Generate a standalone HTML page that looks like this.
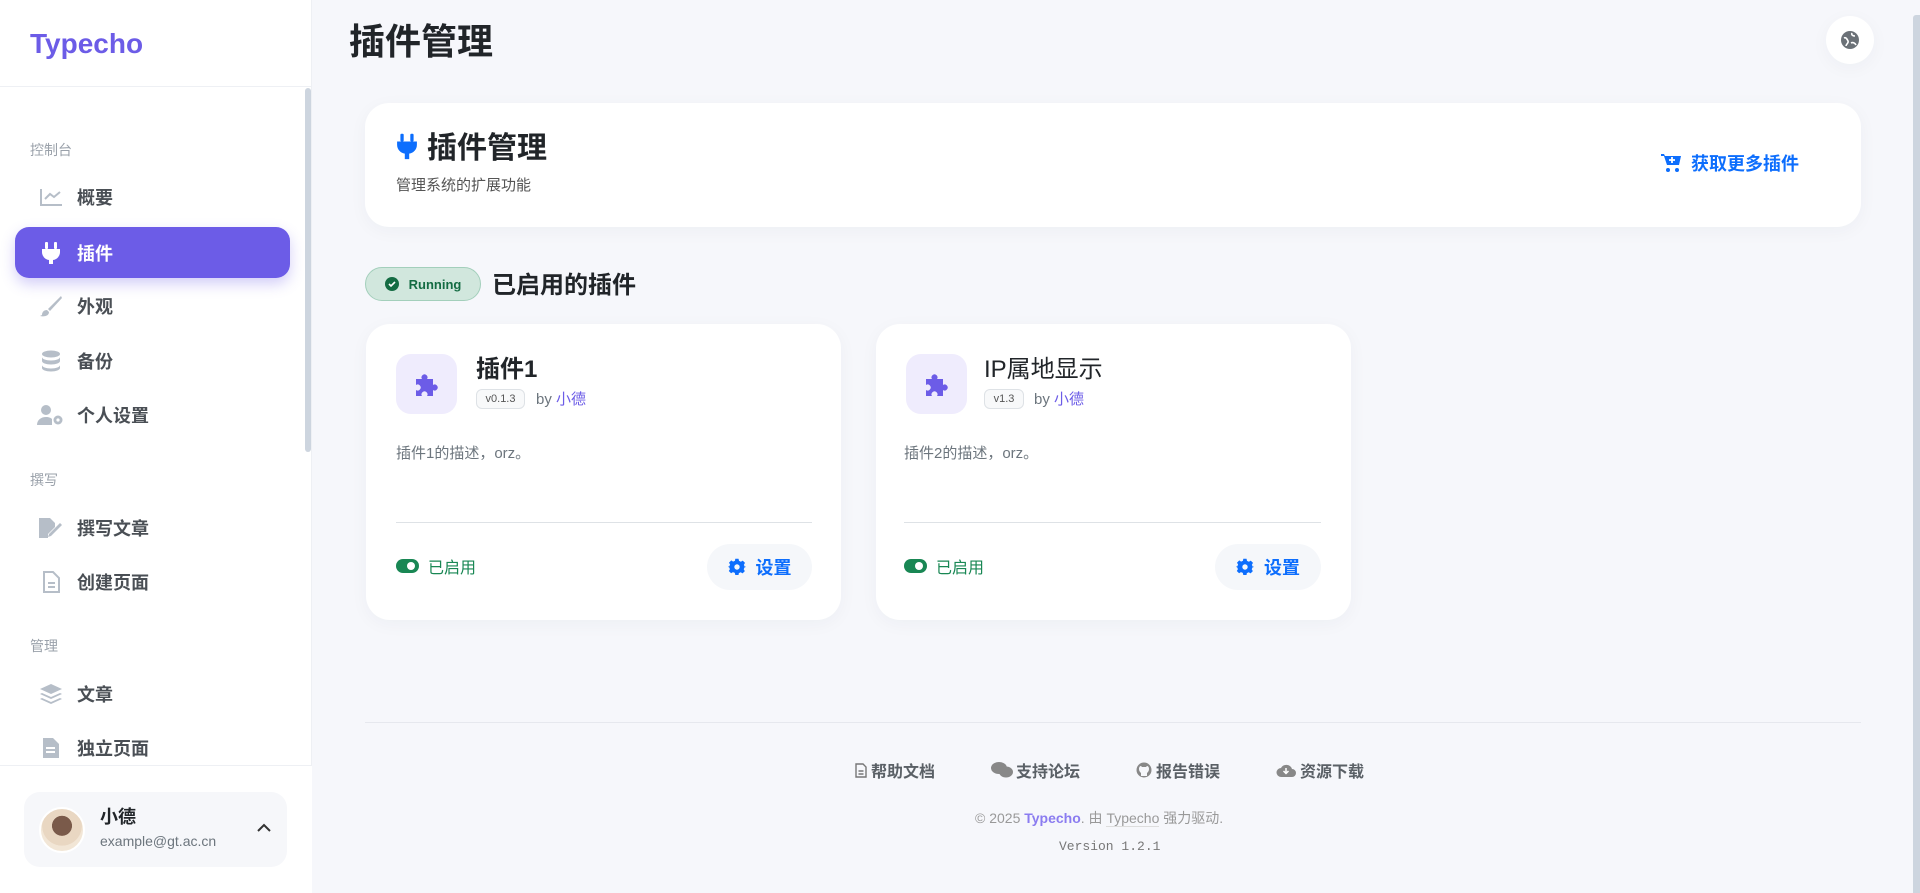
<!DOCTYPE html>
<html><head><meta charset="utf-8"><style>
*{box-sizing:border-box;margin:0;padding:0}
body{width:1920px;height:893px;overflow:hidden;background:#f6f7fb;font-family:"Liberation Sans","Noto Sans CJK SC",sans-serif;color:#212529;position:relative}
.abs{position:absolute}
.side{left:0;top:0;width:312px;height:893px;background:#fff;border-right:1px solid #eef0f4}
.logo{left:30px;top:28px;font-size:28px;font-weight:700;color:#6c5ce7;letter-spacing:0}
.sec{left:30px;font-size:14px;color:#9aa1aa}
.item{left:15px;width:275px;height:50px;border-radius:14px;display:flex;align-items:center;font-size:18px;font-weight:700;color:#4a4f55}
.item .ic{width:36px;margin-left:18px;display:flex;justify-content:center}
.item span{margin-left:8px}
.item.act{background:#6c5ce7;color:#fff;box-shadow:0 6px 14px rgba(108,92,231,.3)}
.card{background:#fff;border-radius:24px;box-shadow:0 4px 18px rgba(30,40,80,.04)}
.btn{display:flex;align-items:center;justify-content:center}
</style></head><body>
<div class="abs side">
<div class="abs logo">Typecho</div>
<div class="abs" style="left:0;top:86px;width:312px;height:1px;background:#eef0f4"></div>
<div class="abs" style="left:305px;top:88px;width:6px;height:364px;background:#cdd5df;border-radius:3px"></div>
<div class="abs sec" style="top:140px">控制台</div>
<div class="abs item" style="top:172px"><div class="ic"><svg width="24" height="20" viewBox="0 0 24 20" fill="none" stroke="#b6bec8" stroke-width="2"><path d="M2 2v16h21M6 12l5-5 4 3 6-5"/></svg></div><span>概要</span></div>
<div class="abs item act" style="top:227px;height:51px"><div class="ic"><svg width="20" height="24" viewBox="0 0 20 24" fill="#fff"><rect x="4" y="1" width="3" height="7" rx="1"/><rect x="13" y="1" width="3" height="7" rx="1"/><path d="M1 8h18v3a8 8 0 0 1-7 8v4h-4v-4a8 8 0 0 1-7-8z"/></svg></div><span>插件</span></div>
<div class="abs item" style="top:281px"><div class="ic"><svg width="24" height="22" viewBox="0 0 24 22" fill="#b6bec8"><path d="M22 1L9 14l2 2L23 3z"/><path d="M8 15c-3 0-5 2-5 5l-2 1c4 1 9 0 9-4z"/></svg></div><span>外观</span></div>
<div class="abs item" style="top:336px"><div class="ic"><svg width="20" height="22" viewBox="0 0 20 22" fill="#b6bec8"><ellipse cx="10" cy="4" rx="9" ry="3.5"/><path d="M1 7c0 2 4 3.5 9 3.5S19 9 19 7v4c0 2-4 3.5-9 3.5S1 13 1 11z"/><path d="M1 15c0 2 4 3.5 9 3.5s9-1.5 9-3.5v3c0 2-4 3.5-9 3.5S1 20 1 18z"/></svg></div><span>备份</span></div>
<div class="abs item" style="top:390px"><div class="ic"><svg width="28" height="22" viewBox="0 0 28 22" fill="#b6bec8"><circle cx="9" cy="6" r="5"/><path d="M0 21c0-5 4-8 9-8 3 0 5 1 6 2v6z"/><circle cx="21" cy="16" r="4.5"/><circle cx="21" cy="16" r="1.6" fill="#fff"/></svg></div><span>个人设置</span></div>
<div class="abs sec" style="top:470px">撰写</div>
<div class="abs item" style="top:503px"><div class="ic"><svg width="26" height="22" viewBox="0 0 26 22" fill="#b6bec8"><path d="M1 1h11l5 5v4l-7 7v4H1z"/><path d="M24 8l-11 11-3 1 1-3 11-11z"/></svg></div><span>撰写文章</span></div>
<div class="abs item" style="top:557px"><div class="ic"><svg width="18" height="22" viewBox="0 0 18 22" fill="none" stroke="#b6bec8" stroke-width="2"><path d="M2 1h9l6 6v14H2z"/><path d="M6 12h7M6 16h7"/></svg></div><span>创建页面</span></div>
<div class="abs sec" style="top:636px">管理</div>
<div class="abs item" style="top:669px"><div class="ic"><svg width="24" height="22" viewBox="0 0 24 22" fill="#b6bec8"><path d="M12 1l11 5-11 5L1 6z"/><path d="M3 10l9 4 9-4 2 1-11 5-11-5z"/><path d="M3 15l9 4 9-4 2 1-11 5-11-5z"/></svg></div><span>文章</span></div>
<div class="abs item" style="top:723px"><div class="ic"><svg width="18" height="22" viewBox="0 0 18 22" fill="#b6bec8"><path d="M1 1h10l6 6v14H1z"/><rect x="4" y="10" width="9" height="2" fill="#fff"/><rect x="4" y="14" width="9" height="2" fill="#fff"/></svg></div><span>独立页面</span></div>
<div class="abs" style="left:0;top:765px;width:312px;height:128px;background:#fff;border-top:1px solid #eef0f4"></div>
<div class="abs" style="left:24px;top:792px;width:263px;height:75px;background:#f6f7fa;border-radius:16px"></div>
<div class="abs" style="left:39px;top:807px;width:46px;height:46px;border-radius:50%;background:radial-gradient(circle at 50% 40%,#7a5a4a 0 30%,#e9d7c2 31% 60%,#f2e6d6 61%);border:2px solid #fff"></div>
<div class="abs" style="left:100px;top:803px;font-size:18px;font-weight:700">小德</div>
<div class="abs" style="left:100px;top:833px;font-size:14px;color:#6c757d">example@gt.ac.cn</div>
<svg class="abs" style="left:256px;top:823px" width="16" height="10" viewBox="0 0 16 10" fill="none" stroke="#333" stroke-width="2"><path d="M2 8l6-6 6 6"/></svg>
</div>

<div class="abs" style="left:349px;top:13px;font-size:36px;font-weight:700">插件管理</div>
<div class="abs card btn" style="left:1826px;top:16px;width:48px;height:48px;border-radius:50%"><svg width="20" height="20" viewBox="0 0 20 20"><circle cx="10" cy="10" r="9" fill="#6b7177"/><path d="M4 8c2-1 3 1 4 3s-2 3-2 5M12 3c-1 2 1 3 3 3M11 13c2-1 4 0 5 2" stroke="#fff" stroke-width="1.6" fill="none"/></svg></div>
<div class="abs" style="left:1913px;top:15px;width:7px;height:878px;background:#cdd5df;border-radius:3px 0 0 0"></div>

<div class="abs card" style="left:365px;top:103px;width:1496px;height:124px">
<svg class="abs" style="left:31px;top:30px" width="22" height="28" viewBox="0 0 20 24" fill="#0d6efd"><rect x="4" y="0" width="3" height="7" rx="1"/><rect x="13" y="0" width="3" height="7" rx="1"/><path d="M1 7h18v3a8 8 0 0 1-7 8v5h-4v-5a8 8 0 0 1-7-8z"/></svg>
<div class="abs" style="left:62px;top:20px;font-size:30px;font-weight:700">插件管理</div>
<div class="abs" style="left:31px;top:71px;font-size:15px;color:#555">管理系统的扩展功能</div>
<svg class="abs" style="left:1296px;top:50px" width="20" height="20" viewBox="0 0 20 20" fill="#0d6efd"><path d="M0 1h3l1 2h16l-2 9H6L3 3H0z"/><circle cx="7" cy="17" r="2"/><circle cx="16" cy="17" r="2"/><path d="M11 4v6M8 7h6" stroke="#fff" stroke-width="1.8"/></svg>
<div class="abs" style="left:1326px;top:47px;font-size:18px;font-weight:700;color:#0d6efd">获取更多插件</div>
</div>

<div class="abs btn" style="left:365px;top:267px;width:116px;height:34px;border-radius:17px;background:#d1e7dd;border:1px solid #a3cfbb;font-size:13px;font-weight:700;color:#146c43"><svg width="14" height="14" viewBox="0 0 14 14" style="margin-right:10px"><circle cx="7" cy="7" r="7" fill="#146c43"/><path d="M4 7l2 2 4-4" stroke="#fff" stroke-width="1.6" fill="none"/></svg>Running</div>
<div class="abs" style="left:492px;top:265px;font-size:24px;font-weight:700">已启用的插件</div>

<div class="abs card" style="left:366px;top:324px;width:475px;height:296px">
<div class="abs btn" style="left:30px;top:30px;width:61px;height:60px;border-radius:15px;background:#efecfd"><svg width="26" height="26" viewBox="0 0 26 26" fill="#6c5ce7"><path d="M2 8h6a3 3 0 1 1 5 0h6v6a3 3 0 1 1 0 5v6h-6a3 3 0 1 0-5 0H2v-6a3 3 0 1 0 0-5z"/></svg></div>
<div class="abs" style="left:110px;top:25px;font-size:24px;font-weight:700">插件1</div>
<div class="abs" style="left:110px;top:65px;width:49px;height:20px;border:1px solid #dee2e6;border-radius:6px;background:#f8f9fa;font-size:11px;color:#555;text-align:center;line-height:18px">v0.1.3</div>
<div class="abs" style="left:170px;top:64px;font-size:15px;color:#6c757d">by <span style="color:#6c5ce7">小德</span></div>
<div class="abs" style="left:30px;top:118px;font-size:15px;color:#6c757d">插件1的描述，orz。</div>
<div class="abs" style="left:30px;top:198px;width:416px;height:1px;background:#dee2e6"></div>
<div class="abs" style="left:30px;top:235px;width:23px;height:14px;border-radius:7px;background:#198754"><div class="abs" style="left:11px;top:3px;width:8px;height:8px;border-radius:50%;background:#fff"></div></div>
<div class="abs" style="left:62px;top:230px;font-size:16px;color:#198754">已启用</div>
<div class="abs btn" style="left:341px;top:220px;width:105px;height:46px;border-radius:23px;background:#f5f7fa;font-size:18px;font-weight:700;color:#0d6efd"><svg width="18" height="18" viewBox="0 0 20 20" style="margin-right:10px"><path fill="#0d6efd" d="M8 0h4l.6 2.6 2.3 1 2.3-1.4 2.8 2.8-1.4 2.3 1 2.3L22 10v0l-2.6.6-1 2.3 1.4 2.3-2.8 2.8-2.3-1.4-2.3 1L12 20H8l-.6-2.6-2.3-1-2.3 1.4L0 15l1.4-2.3-1-2.3L-2 10l2.6-.6 1-2.3L.2 4.8 3 2l2.3 1.4 2.3-1z" transform="scale(.9) translate(1 1)"/><circle cx="10" cy="10" r="3" fill="#f5f7fa"/></svg>设置</div>
</div>

<div class="abs card" style="left:876px;top:324px;width:475px;height:296px">
<div class="abs btn" style="left:30px;top:30px;width:61px;height:60px;border-radius:15px;background:#efecfd"><svg width="26" height="26" viewBox="0 0 26 26" fill="#6c5ce7"><path d="M2 8h6a3 3 0 1 1 5 0h6v6a3 3 0 1 1 0 5v6h-6a3 3 0 1 0-5 0H2v-6a3 3 0 1 0 0-5z"/></svg></div>
<div class="abs" style="left:108px;top:25px;font-size:24px;font-weight:400">IP属地显示</div>
<div class="abs" style="left:108px;top:65px;width:40px;height:20px;border:1px solid #dee2e6;border-radius:6px;background:#f8f9fa;font-size:11px;color:#555;text-align:center;line-height:18px">v1.3</div>
<div class="abs" style="left:158px;top:64px;font-size:15px;color:#6c757d">by <span style="color:#6c5ce7">小德</span></div>
<div class="abs" style="left:28px;top:118px;font-size:15px;color:#6c757d">插件2的描述，orz。</div>
<div class="abs" style="left:28px;top:198px;width:417px;height:1px;background:#dee2e6"></div>
<div class="abs" style="left:28px;top:235px;width:23px;height:14px;border-radius:7px;background:#198754"><div class="abs" style="left:11px;top:3px;width:8px;height:8px;border-radius:50%;background:#fff"></div></div>
<div class="abs" style="left:60px;top:230px;font-size:16px;color:#198754">已启用</div>
<div class="abs btn" style="left:339px;top:220px;width:106px;height:46px;border-radius:23px;background:#f5f7fa;font-size:18px;font-weight:700;color:#0d6efd"><svg width="18" height="18" viewBox="0 0 20 20" style="margin-right:10px"><path fill="#0d6efd" d="M8 0h4l.6 2.6 2.3 1 2.3-1.4 2.8 2.8-1.4 2.3 1 2.3L22 10v0l-2.6.6-1 2.3 1.4 2.3-2.8 2.8-2.3-1.4-2.3 1L12 20H8l-.6-2.6-2.3-1-2.3 1.4L0 15l1.4-2.3-1-2.3L-2 10l2.6-.6 1-2.3L.2 4.8 3 2l2.3 1.4 2.3-1z" transform="scale(.9) translate(1 1)"/><circle cx="10" cy="10" r="3" fill="#f5f7fa"/></svg>设置</div>
</div>

<div class="abs" style="left:365px;top:722px;width:1496px;height:1px;background:#e6e8ee"></div>
<div class="abs" style="left:855px;top:758px;font-size:16px;font-weight:700;color:#5a6066;display:flex;align-items:center"><svg width="12" height="15" viewBox="0 0 12 15" fill="none" stroke="#777" stroke-width="1.4"><path d="M1 1h7l3 3v10H1z M3.5 8h5M3.5 11h5"/></svg><span style="margin-left:4px">帮助文档</span></div>
<div class="abs" style="left:991px;top:758px;font-size:16px;font-weight:700;color:#5a6066;display:flex;align-items:center"><svg width="22" height="16" viewBox="0 0 22 16" fill="#888"><ellipse cx="8" cy="6" rx="8" ry="6"/><ellipse cx="15" cy="10" rx="7" ry="5.5"/></svg><span style="margin-left:3px">支持论坛</span></div>
<div class="abs" style="left:1136px;top:758px;font-size:16px;font-weight:700;color:#5a6066;display:flex;align-items:center"><svg width="16" height="16" viewBox="0 0 16 16"><circle cx="8" cy="8" r="7.5" fill="#888"/><path d="M5 14v-3c-1-1-2-2-2-4s1-3 2-3l1 1h4l1-1c1 0 2 1 2 3s-1 3-2 4v3z" fill="#f6f7fb"/></svg><span style="margin-left:4px">报告错误</span></div>
<div class="abs" style="left:1276px;top:758px;font-size:16px;font-weight:700;color:#5a6066;display:flex;align-items:center"><svg width="20" height="16" viewBox="0 0 20 16"><path d="M5 15a4.5 4.5 0 0 1 0-9 6 6 0 0 1 11 1 4 4 0 0 1 0 8z" fill="#888"/><path d="M10 6v5M7.5 9l2.5 2.5L12.5 9" stroke="#fff" stroke-width="1.5" fill="none"/></svg><span style="margin-left:4px">资源下载</span></div>
<div class="abs" style="left:975px;top:808px;font-size:14px;color:#999">© 2025 <span style="color:#8b7cf0;font-weight:700">Typecho</span>. 由 <span style="border-bottom:1px solid #ddd">Typecho</span> 强力驱动.</div>
<div class="abs" style="left:1059px;top:839px;font-size:13px;color:#777;font-family:'Liberation Mono',monospace">Version 1.2.1</div>
</body></html>
